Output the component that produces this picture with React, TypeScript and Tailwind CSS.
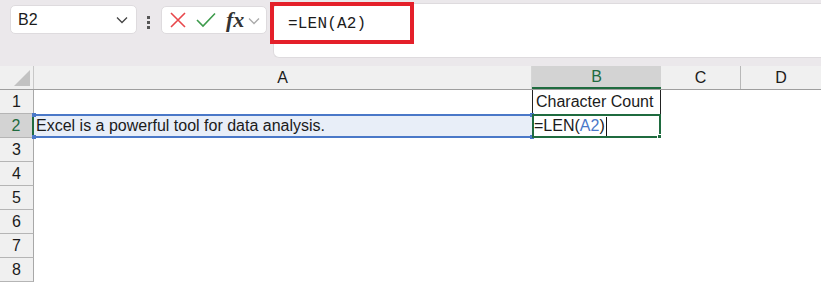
import React from 'react';

const rowNums = [1, 2, 3, 4, 5, 6, 7, 8];

function XIcon() {
  return (
    <svg width="16" height="16" viewBox="0 0 16 16">
      <path d="M1 1 L15 15 M15 1 L1 15" stroke="#e8474b" strokeWidth="1.6" fill="none" />
    </svg>
  );
}

function CheckIcon() {
  return (
    <svg width="20" height="16" viewBox="0 0 20 16">
      <path d="M1 8 L7 14 L19 1.5" stroke="#3d9b4c" strokeWidth="1.6" fill="none" />
    </svg>
  );
}

function Chevron({ color = '#444' }: { color?: string }) {
  return (
    <svg width="12" height="8" viewBox="0 0 12 8">
      <path d="M1 1.5 L6 6.5 L11 1.5" stroke={color} strokeWidth="1.3" fill="none" />
    </svg>
  );
}

export default function App() {
  return (
    <div className="w-[821px] h-[283px] overflow-hidden bg-white font-['Liberation_Sans',sans-serif] text-[#1b1b1b]">
      {/* Toolbar */}
      <div className="relative h-[66px] bg-[#ebe8eb] flex items-start">
        {/* Name box */}
        <div className="ml-[10px] mt-[5px] w-[127px] h-[29px] bg-white rounded-[5px] border border-[#dedbde] flex items-center justify-between pl-[7px] pr-[8px]">
          <span className="text-[16px]">B2</span>
          <Chevron />
        </div>

        {/* dots */}
        <div className="ml-[10px] mt-[16px] flex flex-col gap-[2px]">
          <div className="w-[3px] h-[3px] bg-[#555]" />
          <div className="w-[3px] h-[3px] bg-[#555]" />
          <div className="w-[3px] h-[3px] bg-[#555]" />
        </div>

        {/* formula buttons */}
        <div className="ml-[11px] mt-[6px] w-[106px] h-[28px] bg-white rounded-[5px] border border-[#dedbde] flex items-center pl-[8px]">
          <XIcon />
          <div className="ml-[10px]">
            <CheckIcon />
          </div>
          <span className="ml-[10px] font-['Liberation_Serif',serif] italic text-[22px] leading-none text-[#333] font-semibold">fx</span>
          <div className="ml-[4px] mt-[1px]">
            <Chevron color="#aaa" />
          </div>
        </div>

        {/* formula input */}
        <div className="ml-[6px] mt-[3px] flex-1 h-[55px] bg-white rounded-l-[6px] border border-[#dedbde] border-r-0" />

        {/* red annotation box with formula text */}
        <div className="absolute left-[270px] top-[2px] w-[144px] h-[42px] border-[4px] border-[#e4202a] flex items-center pl-[14px]">
          <span className="font-['Liberation_Mono',monospace] text-[16px] text-[#1b1b1b] tracking-[0.2px] mt-[1px]">=LEN(A2)</span>
        </div>
      </div>

      {/* Column headers */}
      <div className="flex h-[24px] bg-[#f0f0f0] border-b border-[#9e9e9e] text-[16px]">
        <div className="relative w-[34px] border-r border-[#c8c8c8]">
          <svg className="absolute right-[3px] bottom-[3px]" width="16" height="16" viewBox="0 0 16 16">
            <path d="M16 0 L16 16 L0 16 Z" fill="#c2c2c2" />
          </svg>
        </div>
        <div className="w-[498px] flex items-center justify-center border-r border-[#d6d6d6]">A</div>
        <div className="w-[129px] flex items-center justify-center bg-[#d3d3d3] text-[#1f6b3f] border-b-2 border-[#1f6b3f]">B</div>
        <div className="w-[80px] flex items-center justify-center border-r border-[#b8b8b8]">C</div>
        <div className="w-[80px] flex items-center justify-center">D</div>
      </div>

      {/* Rows */}
      {rowNums.map((n) => (
        <div key={n} className="flex h-[24px] text-[16px]">
          <div
            className={`w-[34px] flex items-center justify-center border-b border-[#b5b5b5] ${
              n === 2
                ? 'bg-[#d3d3d3] text-[#1f6b3f] border-r-2 border-r-[#1f6b3f]'
                : 'bg-[#f0f0f0] border-r border-r-[#a8a8a8]'
            }`}
          >
            {n}
          </div>
          {n === 1 && (
            <>
              <div className="w-[498px]" />
              <div className="w-[129px] border-x border-[#222] flex items-center pl-[3px] whitespace-nowrap">
                Character Count
              </div>
            </>
          )}
          {n === 2 && (
            <>
              <div className="relative w-[498px] bg-[#e8eef8] border-y-2 border-[#4a78c8] flex items-center pl-[2px] whitespace-nowrap">
                Excel is a powerful tool for data analysis.
                <div className="absolute -left-[2px] -top-[3px] w-[4px] h-[4px] bg-[#4a78c8]" />
                <div className="absolute -left-[2px] -bottom-[3px] w-[4px] h-[4px] bg-[#4a78c8]" />
                <div className="absolute -right-[2px] -top-[3px] w-[4px] h-[4px] bg-[#4a78c8]" />
                <div className="absolute -right-[2px] -bottom-[3px] w-[4px] h-[4px] bg-[#4a78c8]" />
              </div>
              <div className="relative w-[129px] border-2 border-[#1f6b3f] flex items-center whitespace-nowrap">
                <span>=LEN(</span>
                <span className="text-[#4a78c8]">A2</span>
                <span>)</span>
                <span className="ml-[1px] w-[1px] h-[19px] bg-[#111]" />
                <div className="absolute -right-[3px] -bottom-[3px] w-[5px] h-[5px] bg-[#1f6b3f] border border-white" />
              </div>
            </>
          )}
        </div>
      ))}
    </div>
  );
}
